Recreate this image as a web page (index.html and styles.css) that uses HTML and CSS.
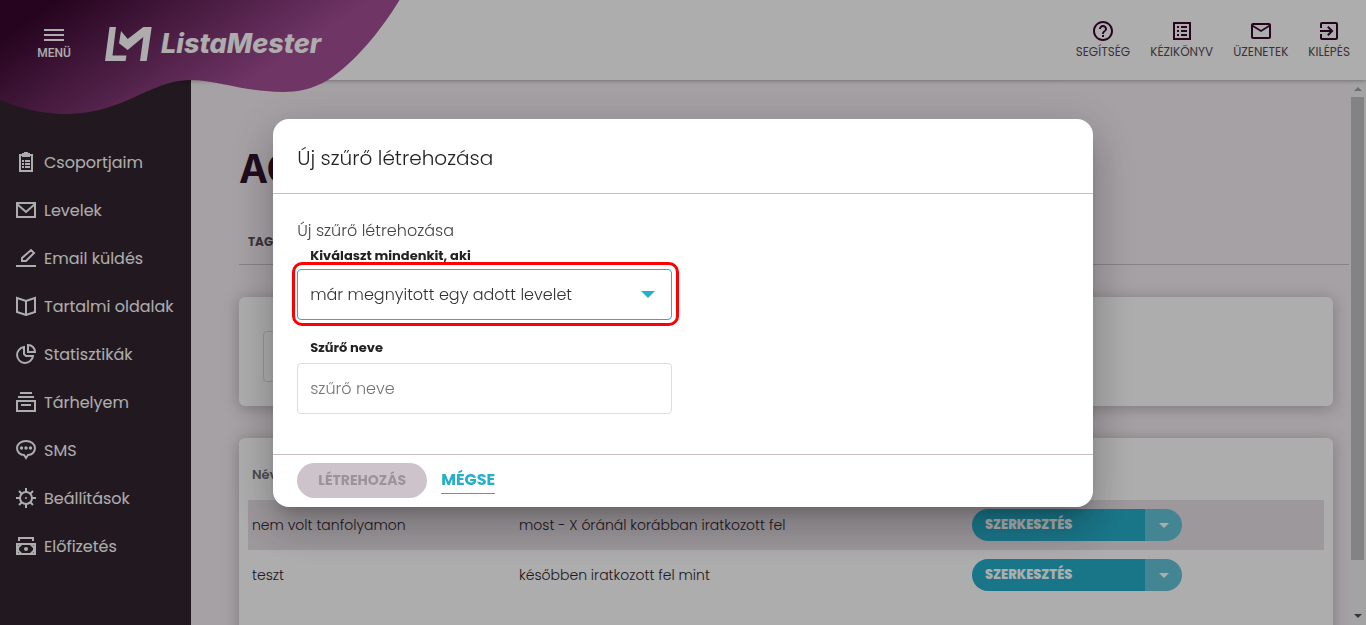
FILE: index.html
```html
<!DOCTYPE html>
<html lang="hu">
<head>
<meta charset="utf-8">
<meta name="viewport" content="width=device-width, initial-scale=1.0">
<title>ListaMester</title>
<link rel="stylesheet" href="styles.css">
</head>
<body>

<header class="topbar">
  <svg class="blob" width="400" height="115" viewBox="0 0 400 115">
    <defs>
      <linearGradient id="blobfill" gradientUnits="userSpaceOnUse" x1="18" y1="27" x2="116" y2="172">
        <stop offset="0" stop-color="#38072e"/>
        <stop offset="1" stop-color="#a34e96"/>
      </linearGradient>
    </defs>
    <path fill="url(#blobfill)" d="M0 0H399.500C380 32 355 62 328 80C306 93 286 93 266 91C236 89 215 80 190 80C150 80 124 114 66 114C40 114 18 107 0 100Z"/>
  </svg>
  <button class="menubtn">
    <svg width="20" height="14" viewBox="0 0 20 14"><path d="M0 2H20M0 7H20M0 12H20" stroke="#fff" stroke-width="2"/></svg>
    MENÜ
  </button>
  <a class="logo" href="#">
    <svg width="48" height="36" viewBox="0 0 48 36" fill="#fff">
      <path d="M4.500 1H11L7.500 29.500H21.500L20.500 35H0Z"/>
      <path d="M16 5L22.700 13L38.300 1H46.700L41.700 35H35L38.300 11L22.700 24L14 17.300Z"/>
    </svg>
    <span class="logotext">ListaMester</span>
  </a>
  <nav class="toplinks">
    <a href="#">
      <svg width="24" height="24" viewBox="0 0 24 24"><path d="M11 18h2v-2h-2v2zm1-16C6.480 2 2 6.480 2 12s4.480 10 10 10 10-4.480 10-10S17.520 2 12 2zm0 18c-4.410 0-8-3.590-8-8s3.590-8 8-8 8 3.590 8 8-3.590 8-8 8zm0-14c-2.210 0-4 1.790-4 4h2c0-1.100.9-2 2-2s2 .9 2 2c0 2-3 1.750-3 5h2c0-2.250 3-2.500 3-5 0-2.210-1.790-4-4-4z"/></svg>
      SEGÍTSÉG
    </a>
    <a href="#">
      <svg width="24" height="24" viewBox="0 0 24 24"><path d="M19 5v14H5V5h14m2-2H3v18h18V3zM11 7h6v2h-6V7zm0 4h6v2h-6v-2zm0 4h6v2h-6zM7 7h2v2H7zm0 4h2v2H7zm0 4h2v2H7z"/></svg>
      KÉZIKÖNYV
    </a>
    <a href="#">
      <svg width="24" height="24" viewBox="0 0 24 24"><path d="M20 4H4c-1.100 0-2 .9-2 2v12c0 1.100.9 2 2 2h16c1.100 0 2-.9 2-2V6c0-1.100-.9-2-2-2zm0 14H4V8l8 5 8-5v10zm-8-7L4 6h16l-8 5z"/></svg>
      ÜZENETEK
    </a>
    <a href="#">
      <svg width="24" height="24" viewBox="0 0 24 24"><path d="M10.090 15.590L11.500 17l5-5-5-5-1.410 1.410L12.670 11H3v2h9.670l-2.580 2.590zM19 3H5c-1.110 0-2 .9-2 2v4h2V5h14v14H5v-4H3v4c0 1.100.89 2 2 2h14c1.100 0 2-.9 2-2V5c0-1.100-.9-2-2-2z"/></svg>
      KILÉPÉS
    </a>
  </nav>
</header>

<div class="layout">
  <nav class="sidebar">
    <a href="#">
      <svg width="20" height="20" viewBox="0 0 20 20"><path class="ln" d="M4 3H16V19H4Z"/><path class="fl" d="M6 1H8V0H12V1H14V5H6ZM6 8H8V10H6ZM9 8H14V10H9ZM6 11H8V13H6ZM9 11H14V13H9ZM6 14H8V16H6ZM9 14H14V16H9Z"/></svg>
      Csoportjaim
    </a>
    <a href="#">
      <svg width="20" height="20" viewBox="0 0 20 20"><path class="ln" d="M1 3H19V17H1ZM1 4L10 12L19 4"/></svg>
      Levelek
    </a>
    <a href="#">
      <svg width="20" height="20" viewBox="0 0 20 20"><path class="ln" d="M6 13V10L15 2L18 5L10 13ZM0 18H20"/></svg>
      Email küldés
    </a>
    <a href="#">
      <svg width="20" height="20" viewBox="0 0 20 20"><path class="ln" d="M1 2L10 5L19 2V16L10 19L1 16ZM10 5V19"/></svg>
      Tartalmi oldalak
    </a>
    <a href="#">
      <svg width="20" height="20" viewBox="0 0 20 20"><path class="ln" d="M8 3A8 8 0 1 0 17 12H10L8 10ZM12 1A7 7 0 0 1 19 8H12Z"/></svg>
      Statisztikák
    </a>
    <a href="#">
      <svg width="20" height="20" viewBox="0 0 20 20"><path class="ln" d="M4 1H16M2 5H18M1 9H19V19H1ZM5 13H15"/></svg>
      Tárhelyem
    </a>
    <a href="#">
      <svg width="20" height="20" viewBox="0 0 20 20"><path class="ln" d="M10 1C15 1 19 4 19 8C19 12 16 15 12 15L10 18L8 15C4 15 1 12 1 8C1 4 5 1 10 1Z"/><circle class="fl" cx="5.500" cy="8" r="1.700"/><circle class="fl" cx="10" cy="8" r="1.700"/><circle class="fl" cx="14.500" cy="8" r="1.700"/></svg>
      SMS
    </a>
    <a href="#">
      <svg width="20" height="20" viewBox="0 0 20 20"><circle class="ln" cx="10" cy="10" r="6"/><path class="ln" d="M10 0V4M10 16V20M0 10H4M16 10H20M3 3L6 6M14 14L17 17M3 17L6 14M14 6L17 3"/><circle class="fl" cx="10" cy="10" r="1"/></svg>
      Beállítások
    </a>
    <a href="#">
      <svg width="20" height="20" viewBox="0 0 20 20"><path class="ln" d="M3 5V2H17V5"/><path class="fl" fill-rule="evenodd" d="M0 7H20V19H0ZM6 9L3 12V14L6 17H14L17 14V12L14 9ZM2 9V10L3 9ZM18 9H17L18 10ZM2 17H3L2 16ZM18 17V16L17 17Z"/><circle class="fl" cx="10" cy="13" r="2"/></svg>
      Előfizetés
    </a>
  </nav>

  <main class="content">
    <h1>AC</h1>
    <div class="tabs"><a href="#">TAGOK</a></div>

    <div class="card filter">
      <input type="text" class="search" aria-label="Keresés">
    </div>

    <div class="card list">
      <table>
        <thead>
          <tr><th class="c1">Név</th><th class="c2"></th><th class="c3"></th></tr>
        </thead>
        <tbody>
          <tr class="odd">
            <td>nem volt tanfolyamon</td>
            <td>most - X óránál korábban iratkozott fel</td>
            <td><div class="split"><button class="edit">SZERKESZTÉS</button><button class="more" aria-label="Több"><span class="caret"></span></button></div></td>
          </tr>
          <tr>
            <td>teszt</td>
            <td>későbben iratkozott fel mint</td>
            <td><div class="split"><button class="edit">SZERKESZTÉS</button><button class="more" aria-label="Több"><span class="caret"></span></button></div></td>
          </tr>
        </tbody>
      </table>
    </div>
  </main>

  <div class="scroll">
    <span class="up"></span>
    <span class="thumb"></span>
    <span class="down"></span>
  </div>
</div>

<div class="overlay">
  <div class="modal" role="dialog" aria-labelledby="modaltitle">
    <h2 id="modaltitle">Új szűrő létrehozása</h2>
    <div class="modalbody">
      <p>Új szűrő létrehozása</p>
      <label for="who">Kiválaszt mindenkit, aki</label>
      <div class="pick">
        <select id="who" class="field">
          <option>már megnyitott egy adott levelet</option>
        </select>
      </div>
      <label for="fname">Szűrő neve</label>
      <input type="text" id="fname" class="field" placeholder="szűrő neve">
    </div>
    <div class="modalfoot">
      <button class="create" disabled>LÉTREHOZÁS</button>
      <a href="#" class="cancel">MÉGSE</a>
    </div>
  </div>
</div>

</body>
</html>
```
FILE: styles.css
```css
* {box-sizing: border-box;}
body {margin: 0; height: 100vh; overflow: hidden; display: flex; flex-direction: column; background: #f4edf2; color: #31252f; font-family: Poppins, Inter, sans-serif; font-size: 16px;}
a {color: inherit; text-decoration: none;}
button {border: 0; padding: 0; font-family: inherit; cursor: pointer;}
svg {display: block; flex: none;}

/* top bar */
.topbar {position: relative; z-index: 2; flex: none; height: 80px; display: flex; align-items: flex-start; background: #fff; box-shadow: 0 1px 4px rgba(0, 0, 0, 0.3);}
.blob {position: absolute; left: 0; top: 0;}
.menubtn {position: relative; margin: 28px 0 0 37px; width: 34px; display: flex; flex-direction: column; align-items: center; gap: 4px; background: none; color: #fff; font-family: Roboto, sans-serif; font-size: 12px; line-height: 14px; font-weight: 500;}
.logo {position: relative; margin: 25px 0 0 34px; display: flex; align-items: center; gap: 8px; color: #fff;}
.logotext {font-family: Inter, sans-serif; font-size: 27px; line-height: 38px; font-weight: 800; font-style: italic;}
.toplinks {margin: 19px 16px 0 auto; display: flex; gap: 20px;}
.toplinks a {display: flex; flex-direction: column; align-items: center; font-size: 12px; line-height: 18px; font-weight: 400; color: #5a4a56;}
.toplinks svg {fill: #38072e;}

/* page */
.layout {flex: 1; min-height: 0; display: flex;}
.sidebar {flex: none; width: 191px; padding-top: 58px; background: #31252f;}
.sidebar a {display: flex; align-items: center; gap: 8px; height: 48px; padding-left: 16px; color: #fff; white-space: nowrap;}
.ln {fill: none; stroke: #fff; stroke-width: 2;}
.fl {fill: #fff;}

.content {flex: 1; min-width: 0; padding-left: 48px; overflow: hidden;}
h1 {margin: 64px 0 0; font-family: Inter, sans-serif; font-size: 39px; line-height: 50px; font-weight: 700; color: #31122c;}
.tabs {margin-top: 32px; height: 39px; padding: 7px 9px; border-bottom: 1px solid #c9c0c6; font-size: 12px; line-height: 18px; font-weight: 700; color: #5a4a56;}
.card {margin: 32px 16px 0 0; background: #fff; border-radius: 6px; box-shadow: 0 2px 16px rgba(0, 0, 0, 0.25);}
.filter {height: 109px; padding: 34px 24px;}
.search {display: block; width: 375px; height: 51px; border: 1px solid #ddd; border-radius: 4px;}
.list {height: 300px; padding: 12px 9px;}
table {width: 100%; border-collapse: collapse; table-layout: fixed; font-size: 14px; font-weight: 300;}
th, td {height: 50px; padding: 0 4px; text-align: left;}
th {font-size: 13px; font-weight: 600; color: #757075;}
.c1 {width: 267px;}
.c2 {width: 453px;}
.odd {background: #e8e0e6;}
.split {display: flex; width: 210px; height: 32px; border-radius: 16px; overflow: hidden;}
.edit {flex: 1; padding-left: 13px; background: #26afcb; color: #fff; font-size: 13px; font-weight: 800; text-align: left;}
.more {width: 37px; display: flex; align-items: center; justify-content: center; background: #64c5d8;}
.caret {border: 5px solid transparent; border-top-color: #fff; border-bottom: 0;}

/* scroll bar */
.scroll {flex: none; width: 17px; padding: 0 2px; display: flex; flex-direction: column; align-items: center; background: #f1f1f1;}
.up {margin: 7px 0 6px; border: 4px solid transparent; border-bottom-color: #a3a3a3; border-top: 0;}
.thumb {width: 13px; height: 85%; background: #c1c1c1;}
.down {margin: auto 0 7px; border: 4px solid transparent; border-top-color: #505050; border-bottom: 0;}

/* dialog */
.overlay {position: fixed; inset: 0; z-index: 10; display: flex; align-items: center; justify-content: center; background: rgba(0, 0, 0, 0.32);}
.modal {width: 60%; background: #fff; border-radius: 16px; color: #444; box-shadow: 0 11px 15px -7px rgba(0, 0, 0, 0.2), 0 24px 38px 3px rgba(0, 0, 0, 0.14), 0 9px 46px 8px rgba(0, 0, 0, 0.12);}
.modal h2 {margin: 0; padding: 24px 24px 20px; border-bottom: 1px solid #c9c0c6; font-size: 20px; line-height: 30px; font-weight: 300; color: #222;}
.modalbody {padding: 24px 24px 40px; font-weight: 300;}
.modalbody p {margin: 0; line-height: 26px;}
.modalbody label {display: block; padding-left: 13px; font-size: 13px; line-height: 24px; font-weight: 700; color: #222;}
.field {display: block; width: 375px; height: 51px; padding: 0 12px; border: 1px solid #ddd; border-radius: 4px; background: #fff; color: #333; font-family: inherit; font-size: 16px; font-weight: 300;}
.field::placeholder {color: #757575;}
.pick {position: relative; width: 375px; margin: 1px 0 16px;}
.pick .field {appearance: none; border-color: #26afcb;}
.pick::before {content: ""; position: absolute; right: 17px; top: 22px; border: 7px solid transparent; border-top-color: #26afcb; border-bottom: 0;}
/* red frame round the picked filter type */
.pick::after {content: ""; position: absolute; inset: -7px -7px -6px -5px; border: 3px solid #f00; border-radius: 10px; pointer-events: none;}
#fname {margin-top: 3px;}
.modalfoot {display: flex; align-items: center; gap: 14px; padding: 8px 24px 9px; border-top: 1px solid #c9c0c6;}
.create {width: 130px; height: 35px; border-radius: 18px; background: #cdc4cb; color: #9c939a; font-size: 14px; font-weight: 700;}
.cancel {border-bottom: 1px solid #26afcb; color: #26afcb; line-height: 26px; font-weight: 700;}
```
